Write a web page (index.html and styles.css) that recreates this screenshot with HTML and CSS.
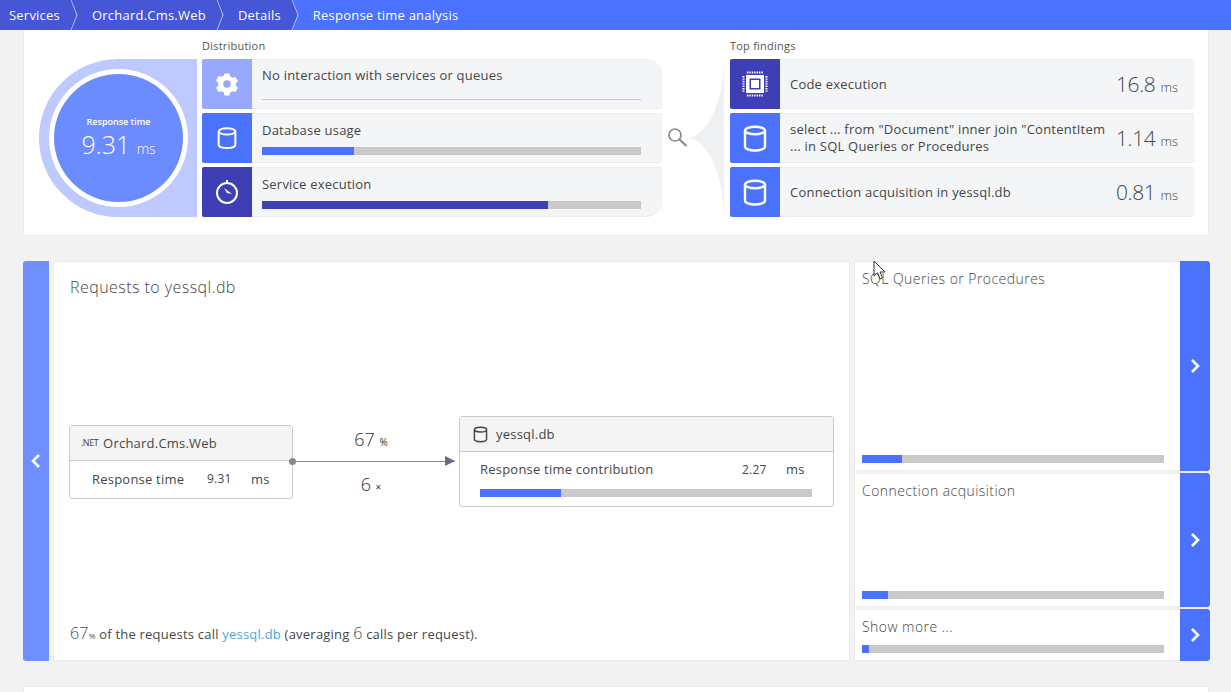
FILE: index.html
```html
<!DOCTYPE html>
<html>
<head>
	<title>Response time analysis</title>
	<link rel="stylesheet" href="styles.css">
</head>
<body>
	<svg class="defs" width="0" height="0">
		<symbol id="db" viewBox="0 0 24 28">
			<path d="M2 6v16c0 2.4 4.500 4 10 4s10-1.600 10-4V6" fill="none" stroke="currentColor" stroke-width="2.400"/>
			<ellipse cx="12" cy="6" rx="10" ry="3.800" fill="none" stroke="currentColor" stroke-width="2.400"/>
		</symbol>
		<symbol id="chev" viewBox="0 0 10 16">
			<path d="M2 2l6 6-6 6" fill="none" stroke="currentColor" stroke-width="2.600"/>
		</symbol>
	</svg>

	<nav class="crumbs">
		<a class="crumb">Services</a>
		<a class="crumb">Orchard.Cms.Web</a>
		<a class="crumb">Details</a>
		<a class="crumb current">Response time analysis</a>
	</nav>

	<section class="summary">
		<div class="gauge">
			<div class="ring">
				<div class="disc">
					<span class="disc_label">Response time</span>
					<span class="disc_value">9.31 <small>ms</small></span>
				</div>
			</div>
		</div>

		<div class="dist">
			<h2>Distribution</h2>
			<div class="rows">
				<div class="row">
					<div class="icon pale">
						<svg width="24" height="24" viewBox="0 0 24 24">
							<path fill="#fff" fill-rule="evenodd" d="M9.500 1.500h5l.7 3 2.300 1.300 3-.9 2.500 4.300-2.200 2.100v2.400l2.200 2.100-2.500 4.300-3-.9-2.300 1.300-.7 3h-5l-.7-3-2.300-1.300-3 .9-2.500-4.300 2.200-2.100v-2.400L1 8.200l2.500-4.300 3 .9 2.300-1.300zM12 8.200a3.800 3.800 0 1 0 0 7.600 3.800 3.800 0 0 0 0-7.600z"/>
						</svg>
					</div>
					<div class="row_body">
						<span class="row_text">No interaction with services or queues</span>
						<div class="thin_line"></div>
					</div>
				</div>
				<div class="row">
					<div class="icon blue"><svg width="20" height="24"><use href="#db"/></svg></div>
					<div class="row_body">
						<span class="row_text">Database usage</span>
						<div class="bar"><div class="fill" style="width:24.300%"></div></div>
					</div>
				</div>
				<div class="row">
					<div class="icon indigo">
						<svg width="24" height="26" viewBox="0 0 24 26">
							<circle cx="12" cy="14" r="10" fill="none" stroke="#fff" stroke-width="2"/>
							<path d="M12 1v3" stroke="#fff" stroke-width="2"/>
							<path d="M12 14l-3-5 8 6z" fill="#fff"/>
						</svg>
					</div>
					<div class="row_body">
						<span class="row_text">Service execution</span>
						<div class="bar"><div class="fill dark" style="width:75.500%"></div></div>
					</div>
				</div>
			</div>
		</div>

		<div class="lens">
			<svg width="22" height="22" viewBox="0 0 22 22">
				<circle cx="8" cy="8" r="6" fill="none" stroke="#8a8a8a" stroke-width="1.700"/>
				<path d="M12.500 12.500l7 6.500" stroke="#8a8a8a" stroke-width="2.200"/>
			</svg>
			<svg width="36" height="158" viewBox="0 0 36 158">
				<path d="M0 79C18 74 33 45 34 0V158C33 113 18 84 0 79z" fill="#eef0f2"/>
			</svg>
		</div>

		<div class="findings">
			<h2>Top findings</h2>
			<div class="rows">
				<div class="row finding">
					<div class="icon indigo">
						<svg width="26" height="26" viewBox="0 0 26 26">
							<rect x="4" y="4" width="18" height="18" fill="#fff"/>
							<rect x="7.500" y="7.500" width="11" height="11" fill="#3f3fb5"/>
							<rect x="9" y="9" width="8" height="8" fill="#fff"/>
							<path d="M5 1.500h16M5 24.500h16M1.500 5v16M24.500 5v16" stroke="#fff" stroke-width="2" stroke-dasharray="1.400 1"/>
						</svg>
					</div>
					<span class="finding_text">Code execution</span>
					<span class="finding_value">16.8 <small>ms</small></span>
				</div>
				<div class="row finding">
					<div class="icon blue"><svg width="24" height="29"><use href="#db"/></svg></div>
					<span class="finding_text">select ... from "Document" inner join "ContentItem<br>... in SQL Queries or Procedures</span>
					<span class="finding_value">1.14 <small>ms</small></span>
				</div>
				<div class="row finding">
					<div class="icon blue"><svg width="24" height="29"><use href="#db"/></svg></div>
					<span class="finding_text">Connection acquisition in yessql.db</span>
					<span class="finding_value">0.81 <small>ms</small></span>
				</div>
			</div>
		</div>
	</section>

	<section class="analysis">
		<a class="back"><svg width="10" height="16" viewBox="0 0 10 16"><path d="M8 2L2 8l6 6" fill="none" stroke="currentColor" stroke-width="2.600"/></svg></a>

		<div class="panel">
			<h1>Requests to yessql.db</h1>
			<div class="diagram">
				<div class="node source">
					<div class="node_head"><span class="net">.NET</span> Orchard.Cms.Web</div>
					<div class="node_line">
						<span class="line_name">Response time</span>
						<span class="line_num">9.31</span>
						<span class="line_unit">ms</span>
					</div>
				</div>
				<div class="link">
					<span class="link_top">67 <small>%</small></span>
					<div class="arrow"></div>
					<span class="link_bot">6 <small>×</small></span>
				</div>
				<div class="node target">
					<div class="node_head">
						<svg class="head_db" width="15" height="17"><use href="#db"/></svg>
						yessql.db
					</div>
					<div class="node_line wide">
						<span class="line_name">Response time contribution</span>
						<span class="line_num">2.27</span>
						<span class="line_unit">ms</span>
					</div>
					<div class="bar node_bar"><div class="fill" style="width:24.400%"></div></div>
				</div>
			</div>
			<p class="note"><span class="big">67</span><small>%</small> of the requests call <a class="link_text">yessql.db</a> (averaging <span class="big">6</span> calls per request).</p>
		</div>

		<div class="side">
			<div class="side_item first">
				<div class="side_body">
					<span class="side_title">SQL Queries or Procedures</span>
					<div class="bar"><div class="fill" style="width:13.300%"></div></div>
				</div>
				<a class="next"><svg width="10" height="16"><use href="#chev"/></svg></a>
			</div>
			<div class="side_item second">
				<div class="side_body">
					<span class="side_title">Connection acquisition</span>
					<div class="bar"><div class="fill" style="width:8.600%"></div></div>
				</div>
				<a class="next"><svg width="10" height="16"><use href="#chev"/></svg></a>
			</div>
			<div class="side_item third">
				<div class="side_body">
					<span class="side_title">Show more ...</span>
					<div class="bar"><div class="fill" style="width:2.300%"></div></div>
				</div>
				<a class="next"><svg width="10" height="16"><use href="#chev"/></svg></a>
			</div>
		</div>
	</section>

	<section class="next_card"></section>

	<svg class="cursor" width="14" height="22" viewBox="0 0 14 22">
		<path d="M1 1v15l3.500-3.200 2.500 6 2.500-1-2.500-5.800h5z" fill="#fff" fill-opacity=".6" stroke="#333" stroke-width="1"/>
	</svg>
</body>
</html>
```

FILE: styles.css
```css
* {
	box-sizing: border-box;
}
html, body {
	height: 692px;
	overflow: hidden;
}
body {
	margin: 0;
	background: #f2f2f2;
	font-family: "Open Sans", "Noto Sans", sans-serif;
	font-size: 13px;
	letter-spacing: .22px;
	color: #454646;
	position: relative;
}
.defs {
	position: absolute;
}
.cursor {
	position: absolute;
	left: 873px;
	top: 260px;
}

/* breadcrumb */
.crumbs {
	display: flex;
	height: 30px;
	background: #4a72ff;
	color: #fff;
}
.crumb {
	position: relative;
	height: 30px;
	line-height: 30px;
	padding: 0 11px 0 9px;
	background: #4556d7;
}
.crumb + .crumb {
	padding-left: 21px;
}
.crumb::after {
	content: "";
	position: absolute;
	right: -11.600px;
	top: 4.400px;
	width: 21.200px;
	height: 21.200px;
	transform: scaleX(.4) rotate(45deg);
	border-top: 1.500px solid #fff;
	border-right: 1.500px solid #fff;
	background: #4556d7;
	z-index: 1;
}
.crumb.current {
	background: #4a72ff;
}
.crumb.current::after {
	display: none;
}

/* top card */
.summary {
	display: flex;
	margin: 0 22px 0 23px;
	height: 206px;
	padding: 0 14px 0 15px;
	background: #fff;
	border: 1px solid #ebebeb;
	border-top: 0;
	border-radius: 0 0 3px 3px;
}
h2 {
	margin: 0;
	height: 29px;
	padding-top: 9px;
	font-size: 11px;
	line-height: 14px;
	font-weight: 400;
	color: #555;
}
.gauge {
	flex: none;
	width: 158px;
	height: 158px;
	margin: 29px 5px 0 0;
	padding: 10px 9px 10px 10px;
	background: #bdc9ff;
	border-radius: 79px 0 0 79px;
}
.ring {
	width: 139px;
	height: 138px;
	padding: 5px;
	background: #6b8cff;
	border: 5px solid #fff;
	border-radius: 50%;
}
.disc {
	display: flex;
	flex-direction: column;
	align-items: center;
	justify-content: center;
	height: 100%;
	padding-top: 5px;
	letter-spacing: 0;
	color: #fff;
}
.disc_label {
	font-size: 9px;
	line-height: 12px;
	font-weight: 600;
}
.disc_value {
	font-size: 25px;
	line-height: 32px;
	font-weight: 300;
}
.disc_value small {
	font-size: 14px;
}
.dist {
	flex: none;
	width: 460px;
}
.rows {
	display: flex;
	flex-direction: column;
	gap: 4px;
}
.row {
	display: flex;
	height: 50px;
	background: #f4f5f7;
	border: 1px solid #ebedf0;
	border-left: 0;
	border-radius: 0 2px 2px 0;
}
.dist .row:first-child {
	border-top-right-radius: 16px;
}
.dist .row:last-child {
	border-bottom-right-radius: 16px;
}
.dist .row:first-child .row_text {
	margin-top: -1px;
}
.icon {
	display: flex;
	flex: none;
	align-self: stretch;
	align-items: center;
	justify-content: center;
	width: 50px;
	margin: -1px 0;
	border-radius: 2px 0 0 2px;
	color: #fff;
}
.pale {
	background: #97a9ff;
}
.blue {
	background: #4a72ff;
}
.indigo {
	background: #3f3fb5;
}
.row_body {
	flex: 1;
	display: flex;
	flex-direction: column;
	justify-content: space-between;
	padding: 7px 20px 7px 10px;
}
.row_text {
	line-height: 18px;
}
.thin_line {
	height: 1px;
	margin-bottom: 1px;
	background: #c9c9c9;
}
.bar {
	height: 8px;
	background: #c9c9c9;
}
.fill {
	height: 8px;
	background: #4a72ff;
}
.fill.dark {
	background: #3f3fb5;
}
.lens {
	flex: none;
	display: flex;
	align-items: center;
	width: 68px;
	height: 158px;
	margin-top: 29px;
	padding-left: 5px;
}
.lens svg:last-child {
	margin-left: 1px;
}
.findings {
	flex: none;
	width: 464px;
}
.finding {
	align-items: center;
	border-radius: 2px;
}
.finding_text {
	flex: 1;
	padding-left: 10px;
	line-height: 17px;
	white-space: nowrap;
}
.finding_value {
	flex: none;
	padding-right: 15px;
	font-size: 21px;
	font-weight: 300;
	letter-spacing: -.4px;
}
.finding_value small {
	font-size: 13px;
	letter-spacing: 0;
}

/* main area */
.analysis {
	display: flex;
	height: 400px;
	margin: 25px 21px 0 23px;
}
.back {
	display: flex;
	flex: none;
	align-items: center;
	justify-content: center;
	width: 26px;
	background: #6f8eff;
	border-radius: 3px 0 0 3px;
	color: #fff;
}
.panel {
	display: flex;
	flex-direction: column;
	flex: none;
	width: 797px;
	margin-left: 4px;
	padding: 0 15px;
	background: #fff;
	border: 1px solid #ebebeb;
}
h1 {
	margin: 0 0 0 1px;
	padding-top: 13px;
	font-size: 16px;
	line-height: 24px;
	font-weight: 300;
	letter-spacing: .45px;
	color: #454646;
}
.diagram {
	flex: 1;
	display: flex;
	align-items: center;
}
.node {
	flex: none;
	border: 1px solid #c9c9c9;
	border-radius: 3px;
}
.node_head {
	display: flex;
	align-items: center;
	height: 35px;
	padding-left: 11px;
	background: #f4f4f4;
	border-bottom: 1px solid #c9c9c9;
}
.source {
	position: relative;
	width: 224px;
	height: 74px;
}
.source::after {
	content: "";
	position: absolute;
	right: -4px;
	top: 32px;
	width: 7px;
	height: 7px;
	background: #898989;
	border-radius: 50%;
}
.net {
	margin-right: 5px;
	font-size: 9px;
	letter-spacing: -.5px;
}
.node_line {
	display: flex;
	padding: 0 22px;
	height: 37px;
	line-height: 36px;
}
.source .line_name {
	width: 115px;
}
.source .line_num {
	width: 44px;
	font-size: 12px;
}
.link {
	flex: none;
	display: flex;
	flex-direction: column;
	align-items: center;
	width: 166px;
	padding-right: 4px;
	letter-spacing: 0;
	color: #333;
}
.link_top, .link_bot {
	height: 28px;
	margin-right: 6px;
	font-size: 18px;
	line-height: 28px;
	font-weight: 300;
}
.link small {
	font-size: 10px;
	font-weight: 400;
}
.arrow {
	position: relative;
	width: 100%;
	height: 1px;
	margin: 8px 0;
	background: #898989;
}
.arrow::after {
	content: "";
	position: absolute;
	right: 0;
	top: -5px;
	border-left: 10px solid #6b6b85;
	border-top: 5px solid transparent;
	border-bottom: 5px solid transparent;
}
.target {
	width: 375px;
	height: 91px;
}
.target .node_head {
	padding-left: 13px;
}
.head_db {
	margin-right: 8px;
	color: #454646;
}
.node_line.wide {
	padding: 0 20px;
	height: 37px;
	line-height: 35px;
}
.wide .line_name {
	width: 262px;
}
.wide .line_num {
	width: 44px;
	font-size: 12px;
}
.node_bar {
	margin: 0 21px 0 20px;
}
.note {
	margin: 0 0 15px 1px;
	line-height: 18px;
}
.note .big {
	font-size: 16px;
	font-weight: 300;
}
.note small {
	font-size: 8px;
}
.link_text {
	color: #4fa3d9;
}

/* right column */
.side {
	display: flex;
	flex-direction: column;
	gap: 2px;
	flex: none;
	width: 356px;
	margin-left: 4px;
}
.side_item {
	display: flex;
}
.first {
	height: 210px;
}
.second {
	height: 134px;
}
.third {
	height: 52px;
}
.side_body {
	flex: 1;
	display: flex;
	flex-direction: column;
	justify-content: space-between;
	padding: 7px 16px 7px 7px;
	background: #fff;
	border: 1px solid #ebebeb;
	border-right: 0;
}
.side_title {
	font-size: 14px;
	line-height: 20px;
	font-weight: 300;
	letter-spacing: .45px;
}
.next {
	display: flex;
	flex: none;
	align-items: center;
	justify-content: center;
	width: 30px;
	background: #4a72ff;
	border-radius: 0 3px 3px 0;
	color: #fff;
}

.next_card {
	height: 20px;
	margin: 25px 22px 0 23px;
	background: #fff;
	border: 1px solid #ebebeb;
	border-radius: 3px;
}
```
